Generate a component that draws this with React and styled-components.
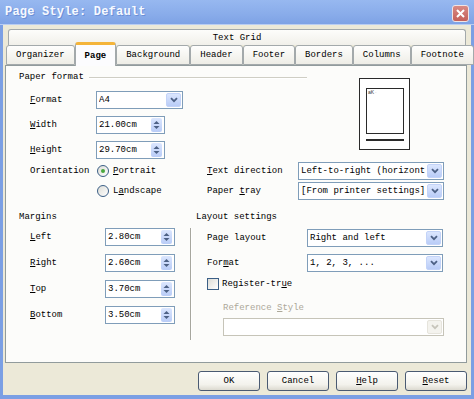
import styled, { createGlobalStyle } from "styled-components";

const GlobalStyle = createGlobalStyle`
  html, body {
    margin: 0;
    padding: 0;
    background: #ffffff;
  }
  * {
    box-sizing: border-box;
  }
`;

const mono = `"Liberation Mono", "DejaVu Sans Mono", monospace`;

const Window = styled.div`
  width: 474px;
  height: 399px;
  display: flex;
  flex-direction: column;
  background: #7b9fe4;
  font-family: ${mono};
  font-size: 9px;
  color: #000;
`;

const TitleBar = styled.div`
  height: 25px;
  display: flex;
  align-items: center;
  justify-content: space-between;
  padding: 0 5px 0 5px;
  background: linear-gradient(#97b8f0, #89acea 60%, #7ea2e5);
  border-bottom: 1px solid #b9cdf2;
`;

const Title = styled.span`
  font-size: 12px;
  font-weight: bold;
  color: #f6f9ff;
  text-shadow: 1px 1px 0 #6b8fd6;
  letter-spacing: 0.2px;
`;

const CloseButton = styled.span`
  width: 17px;
  height: 17px;
  margin-top: 2px;
  border: 1px solid #f1e4e4;
  border-radius: 3px;
  background: linear-gradient(#d88a84, #c4605a);
  display: flex;
  align-items: center;
  justify-content: center;
`;

const Body = styled.div`
  flex: 1;
  margin: 0 3px 4px 3px;
  padding: 4px 4px 4px 2px;
  background: #ece9d8;
  display: flex;
  flex-direction: column;
`;

const TabStrip = styled.div`
  display: flex;
  flex-direction: column;
`;

const GridTab = styled.div`
  height: 16px;
  margin: 0 1px 0 3px;
  border: 1px solid #a3a9ab;
  border-bottom: none;
  border-radius: 3px 3px 0 0;
  background: linear-gradient(#fdfdfb, #f1f0ea);
  display: flex;
  align-items: center;
  justify-content: center;
`;

const TabRow = styled.div`
  height: 20px;
  display: flex;
  align-items: flex-end;
  margin: 0 1px 0 1px;
`;

const Tab = styled.div`
  position: relative;
  height: ${({ $active }) => ($active ? "24px" : "20px")};
  margin-bottom: ${({ $active }) => ($active ? "-1px" : "0")};
  z-index: ${({ $active }) => ($active ? 2 : 1)};
  padding: 0 9px;
  border: 1px solid #a3a9ab;
  border-top: ${({ $active }) => ($active ? "3px solid #f4b43a" : "1px solid #a3a9ab")};
  border-bottom: ${({ $active }) => ($active ? "none" : "1px solid #a3a9ab")};
  border-radius: 3px 3px 0 0;
  background: ${({ $active }) =>
    $active ? "#fcfcfe" : "linear-gradient(#fefefd, #eeede6)"};
  font-weight: ${({ $active }) => ($active ? "bold" : "normal")};
  display: flex;
  align-items: center;
  justify-content: center;
  flex: ${({ $grow }) => ($grow ? 1 : "none")};
  white-space: nowrap;
`;

const Panel = styled.div`
  height: 298px;
  border: 1px solid #919b9c;
  background: #fcfcfa;
  padding: 4px 10px 0 13px;
  display: flex;
  flex-direction: column;
`;

const PaperGrid = styled.div`
  display: grid;
  grid-template-columns: 11px 66px 101px 143px 1fr;
  grid-template-rows: 18px 24px 26px 23px 20px 20px;
  grid-template-areas:
    "head head head head prev"
    ". fl fc . prev"
    ". wl wc . prev"
    ". hl hc . prev"
    ". ol oc td td"
    ". . lc pt pt";
  align-items: center;
`;

const GroupHeader = styled.div`
  grid-area: ${({ $area }) => $area || "auto"};
  align-self: start;
  height: 14px;
  display: flex;
  align-items: center;
  gap: 5px;
  padding-right: ${({ $trim }) => ($trim ? `${$trim}px` : "0")};
  &::after {
    content: "";
    flex: 1;
    height: 1px;
    background: #cfcec4;
    box-shadow: 0 1px 0 #ffffff;
  }
`;

const Cell = styled.div`
  grid-area: ${({ $area }) => $area};
  padding-left: ${({ $indent }) => ($indent ? `${$indent}px` : "0")};
  display: flex;
  align-items: center;
  white-space: nowrap;
`;

const Preview = styled.div`
  grid-area: prev;
  align-self: start;
  margin: 8px 0 0 19px;
  line-height: 0;
`;

const SelectBox = styled.div`
  width: ${({ $w }) => $w}px;
  height: 18px;
  border: 1px solid ${({ $disabled }) => ($disabled ? "#c6c4b8" : "#7f9db9")};
  background: #ffffff;
  padding: 0 1px 0 2px;
  display: flex;
  align-items: center;
  gap: 1px;
`;

const SelectText = styled.span`
  flex: 1;
  overflow: hidden;
  white-space: nowrap;
`;

const ArrowButton = styled.span`
  width: 15px;
  height: 14px;
  border-radius: 2px;
  background: ${({ $disabled }) =>
    $disabled ? "#f4f3ee" : "linear-gradient(#dbe6fe, #b9ccf7)"};
  border: 1px solid ${({ $disabled }) => ($disabled ? "#e6e4dc" : "#c3d3f8")};
  display: flex;
  align-items: center;
  justify-content: center;
`;

const SpinBox = styled.div`
  width: ${({ $w }) => $w}px;
  height: 18px;
  border: 1px solid #7f9db9;
  background: #ffffff;
  padding: 0 2px 0 2px;
  display: flex;
  align-items: center;
`;

const SpinButton = styled.span`
  width: 11px;
  height: 14px;
  border-radius: 2px;
  background: linear-gradient(#dbe6fe, #b9ccf7);
  display: flex;
  align-items: center;
  justify-content: center;
`;

const Label = styled.span`
  width: ${({ $w }) => ($w ? `${$w}px` : "auto")};
  flex: none;
  color: ${({ $disabled }) => ($disabled ? "#aca899" : "#000")};
`;

const Radio = styled.span`
  width: 12px;
  height: 12px;
  margin: 0 4px 0 1px;
  border-radius: 50%;
  border: 1px solid #3b5f86;
  background: linear-gradient(135deg, #dcdcd6, #ffffff);
  display: flex;
  align-items: center;
  justify-content: center;
  &::after {
    content: "";
    width: 4px;
    height: 4px;
    border-radius: 50%;
    background: ${({ $checked }) => ($checked ? "#4aa83e" : "transparent")};
  }
`;

const CheckBox = styled.span`
  width: 12px;
  height: 12px;
  margin-right: 3px;
  border: 1px solid #3b5f86;
  background: linear-gradient(135deg, #dcdcd6, #ffffff);
`;

const BottomGrid = styled.div`
  margin-top: 9px;
  display: grid;
  grid-template-columns: 167px 1fr;
  column-gap: 10px;
`;

const Column = styled.div`
  display: flex;
  flex-direction: column;
`;

const MarginRow = styled.div`
  height: 26px;
  padding-left: 11px;
  display: flex;
  align-items: center;
`;

const LayoutBody = styled.div`
  margin: 4px 0 0 -6px;
  padding: 0 0 4px 16px;
  border-left: 1px solid #a7a79e;
  box-shadow: inset 1px 0 0 #ffffff;
  display: flex;
  flex-direction: column;
`;

const LayoutRow = styled.div`
  height: ${({ $h }) => $h || 20}px;
  margin-top: ${({ $mt }) => $mt || 0}px;
  padding-left: ${({ $indent }) => $indent || 0}px;
  display: flex;
  align-items: center;
  white-space: nowrap;
`;

const ButtonRow = styled.div`
  margin-top: 8px;
  display: flex;
  justify-content: flex-end;
  gap: 7px;
`;

const Button = styled.div`
  width: 62px;
  height: 20px;
  border: 1px solid #4a5a72;
  border-radius: 3px;
  background: linear-gradient(#ffffff, #f3f2ec 70%, #dcdad0);
  display: flex;
  align-items: center;
  justify-content: center;
`;

const Chevron = ({ color = "#4d6185" }) => (
  <svg width="8" height="6" viewBox="0 0 8 6">
    <path d="M1 1.2 L4 4.2 L7 1.2" stroke={color} strokeWidth="1.8" fill="none" />
  </svg>
);

const Select = ({ w, value, disabled }) => (
  <SelectBox $w={w} $disabled={disabled}>
    <SelectText>{value}</SelectText>
    <ArrowButton $disabled={disabled}>
      <Chevron color={disabled ? "#c7c5bb" : "#4d6185"} />
    </ArrowButton>
  </SelectBox>
);

const Spin = ({ w, value }) => (
  <SpinBox $w={w}>
    <SelectText>{value}</SelectText>
    <SpinButton>
      <svg width="7" height="10" viewBox="0 0 7 10">
        <path d="M3.5 1 L6.5 4 L0.5 4 Z" fill="#4d6185" />
        <path d="M0.5 6 L6.5 6 L3.5 9 Z" fill="#4d6185" />
      </svg>
    </SpinButton>
  </SpinBox>
);

const margins = [
  { key: "L", rest: "eft", value: "2.80cm" },
  { key: "R", rest: "ight", value: "2.60cm" },
  { key: "T", rest: "op", value: "3.70cm" },
  { key: "B", rest: "ottom", value: "3.50cm" },
];

const tabs = ["Organizer", "Page", "Background", "Header", "Footer", "Borders", "Columns", "Footnote"];

export default function App() {
  return (
    <>
      <GlobalStyle />
      <Window>
        <TitleBar>
          <Title>Page Style: Default</Title>
          <CloseButton>
            <svg width="9" height="9" viewBox="0 0 9 9">
              <path d="M1 1 L8 8 M8 1 L1 8" stroke="#ffffff" strokeWidth="2" />
            </svg>
          </CloseButton>
        </TitleBar>
        <Body>
          <TabStrip>
            <GridTab>Text Grid</GridTab>
            <TabRow>
              {tabs.map((t, i) => (
                <Tab key={t} $active={t === "Page"} $grow={i === tabs.length - 1}>
                  {t}
                </Tab>
              ))}
            </TabRow>
          </TabStrip>
          <Panel>
            <PaperGrid>
              <GroupHeader $area="head" $trim={33}>Paper format</GroupHeader>
              <Cell $area="fl"><u>F</u>ormat</Cell>
              <Cell $area="fc"><Select w={87} value="A4" /></Cell>
              <Cell $area="wl"><u>W</u>idth</Cell>
              <Cell $area="wc"><Spin w={69} value="21.00cm" /></Cell>
              <Cell $area="hl"><u>H</u>eight</Cell>
              <Cell $area="hc"><Spin w={69} value="29.70cm" /></Cell>
              <Cell $area="ol">Orientation</Cell>
              <Cell $area="oc">
                <Radio $checked />
                <span><u>P</u>ortrait</span>
              </Cell>
              <Cell $area="lc">
                <Radio />
                <span>L<u>a</u>ndscape</span>
              </Cell>
              <Preview>
                <svg width="51" height="72" viewBox="0 0 51 72">
                  <rect x="0.5" y="0.5" width="50" height="71" fill="#ffffff" stroke="#2a2a2a" />
                  <rect x="7.5" y="10.5" width="37" height="45" fill="#ffffff" stroke="#2a2a2a" />
                  <text x="9" y="16" fontSize="5" fontFamily="Liberation Sans, sans-serif" fill="#333">aK</text>
                  <text x="16" y="16" fontSize="5" fontFamily="Liberation Sans, sans-serif" fill="#aaa">·</text>
                  <line x1="7" y1="62" x2="45" y2="62" stroke="#2a2a2a" strokeWidth="2" />
                </svg>
              </Preview>
              <Cell $area="td" $indent={10}>
                <Label $w={91}><u>T</u>ext direction</Label>
                <Select w={146} value="Left-to-right (horizont" />
              </Cell>
              <Cell $area="pt" $indent={10}>
                <Label $w={91}>Paper <u>t</u>ray</Label>
                <Select w={146} value="[From printer settings]" />
              </Cell>
            </PaperGrid>
            <BottomGrid>
              <Column>
                <GroupHeader>Margins</GroupHeader>
                {margins.map((m) => (
                  <MarginRow key={m.key}>
                    <Label $w={75}>
                      <u>{m.key}</u>
                      {m.rest}
                    </Label>
                    <Spin w={70} value={m.value} />
                  </MarginRow>
                ))}
              </Column>
              <Column>
                <GroupHeader $trim={1}>Layout settings</GroupHeader>
                <LayoutBody>
                  <LayoutRow>
                    <Label $w={100}>Page layout</Label>
                    <Select w={136} value="Right and left" />
                  </LayoutRow>
                  <LayoutRow $mt={5}>
                    <Label $w={100}>For<u>m</u>at</Label>
                    <Select w={136} value="1, 2, 3, ..." />
                  </LayoutRow>
                  <LayoutRow $h={22}>
                    <CheckBox />
                    <span>Register-tr<u>u</u>e</span>
                  </LayoutRow>
                  <LayoutRow $h={14} $mt={6} $indent={16}>
                    <Label $disabled>Reference <u>S</u>tyle</Label>
                  </LayoutRow>
                  <LayoutRow $h={18} $mt={3} $indent={16}>
                    <Select w={221} value="" disabled />
                  </LayoutRow>
                </LayoutBody>
              </Column>
            </BottomGrid>
          </Panel>
          <ButtonRow>
            <Button>OK</Button>
            <Button>Cancel</Button>
            <Button><span><u>H</u>elp</span></Button>
            <Button><span><u>R</u>eset</span></Button>
          </ButtonRow>
        </Body>
      </Window>
    </>
  );
}
